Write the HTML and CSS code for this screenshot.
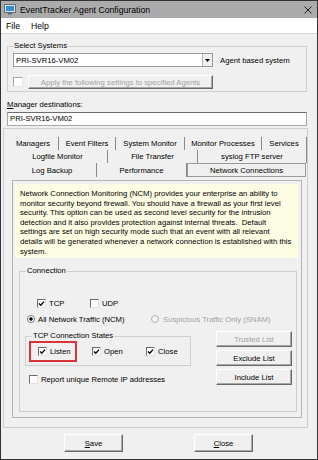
FILE: index.html
```html
<!DOCTYPE html>
<html>
<head>
<meta charset="utf-8">
<title>EventTracker Agent Configuration</title>
<link rel="stylesheet" href="styles.css">
</head>
<body>
<div class="window">
  <div class="titlebar">
    <svg class="appicon" width="12" height="11" viewBox="0 0 12 11">
      <rect x="0.5" y="0.5" width="11" height="8" fill="#dfe4ea" stroke="#5d6d7e"/>
      <rect x="2" y="2" width="8" height="5" fill="#2e8fd6"/>
      <rect x="4" y="9" width="4" height="1.6" fill="#5d6d7e"/>
    </svg>
    <span class="title">EventTracker Agent Configuration</span>
    <svg class="xclose" width="8" height="8" viewBox="0 0 8 8">
      <path d="M0.5 0.5 L7.5 7.5 M7.5 0.5 L0.5 7.5" stroke="#222" stroke-width="1"/>
    </svg>
  </div>
  <div class="menubar"><span>File</span><span>Help</span></div>

  <div class="content">
    <fieldset class="group sel">
      <legend>Select Systems</legend>
      <div class="srow">
        <div class="combo">
          <span>PRI-SVR16-VM02</span>
          <span class="drop"><svg width="5" height="3" viewBox="0 0 5 3"><path d="M0 0 H5 L2.5 3 Z" fill="#000"/></svg></span>
        </div>
        <span class="agent">Agent based system</span>
      </div>
      <div class="srow">
        <span class="cb dis"></span>
        <div class="btn dis apply">Apply the following settings to specified Agents</div>
      </div>
    </fieldset>

    <div class="mgrlabel"><u>M</u>anager destinations:</div>
    <div class="input">PRI-SVR16-VM02</div>

    <div class="tabframe">
      <div class="tabrow">
        <div class="tab w51">Managers</div>
        <div class="tab w57">Event Filters</div>
        <div class="tab w69">System Monitor</div>
        <div class="tab w77">Monitor Processes</div>
        <div class="tab w45">Services</div>
      </div>
      <div class="tabrow">
        <div class="tab w100">Logfile Monitor</div>
        <div class="tab w90">File Transfer</div>
        <div class="tab w109">syslog FTP server</div>
      </div>
      <div class="tabrow r3">
        <div class="tab w89">Log Backup</div>
        <div class="tab w90">Performance</div>
        <div class="tab active w119">Network Connections</div>
      </div>

      <div class="panel">
        <div class="desc">Network Connection Monitoring (NCM) provides your enterprise an ability to<br>monitor security beyond firewall. You should have a firewall as your first level<br>security. This option can be used as second level security for the intrusion<br>detection and it also provides protection against internal threats.&nbsp; Default<br>settings are set on high security mode such that an event with all relevant<br>details will be generated whenever a network connection is established with this<br>system.</div>

        <fieldset class="group conn">
          <legend>Connection</legend>
          <div class="crow tcp">
            <div class="item w53"><span class="cb"><svg viewBox="0 0 7 7"><path d="M1 3.4 L2.8 5.2 L6 1.6" fill="none" stroke="#000" stroke-width="1.4"/></svg></span><span>TCP</span></div>
            <div class="item"><span class="cb"></span><span>UDP</span></div>
          </div>
          <div class="crow radios">
            <div class="item w124 g3"><span class="radio on"></span><span>All Network Traffic (NCM)</span></div>
            <div class="item g4 distext"><span class="radio dis"></span><span>Suspicious Traffic Only (SNAM)</span></div>
          </div>
          <div class="split">
            <div class="leftcol">
              <fieldset class="group tcs">
                <legend>TCP Connection States</legend>
                <div class="states">
                  <div class="item listen"><span class="cb"><svg viewBox="0 0 7 7"><path d="M1 3.4 L2.8 5.2 L6 1.6" fill="none" stroke="#000" stroke-width="1.4"/></svg></span><span>Listen</span></div>
                  <div class="item w54 open"><span class="cb"><svg viewBox="0 0 7 7"><path d="M1 3.4 L2.8 5.2 L6 1.6" fill="none" stroke="#000" stroke-width="1.4"/></svg></span><span>Open</span></div>
                  <div class="item"><span class="cb"><svg viewBox="0 0 7 7"><path d="M1 3.4 L2.8 5.2 L6 1.6" fill="none" stroke="#000" stroke-width="1.4"/></svg></span><span>Close</span></div>
                </div>
              </fieldset>
              <div class="item report"><span class="cb"></span><span>Report unique Remote IP addresses</span></div>
            </div>
            <div class="rightcol">
              <div class="btn dis lb">Trusted List</div>
              <div class="btn lb">Exclude List</div>
              <div class="btn lb">Include List</div>
            </div>
          </div>
        </fieldset>
      </div>
    </div>

    <div class="footer">
      <div class="btn fbtn save"><span><u>S</u>ave</span></div>
      <div class="btn fbtn close"><span><u>C</u>lose</span></div>
    </div>
  </div>
</div>
</body>
</html>
```
FILE: styles.css
```css
* { box-sizing: border-box; }
html, body { margin: 0; padding: 0; }
body {
  width: 318px;
  height: 460px;
  overflow: hidden;
  font-family: "Liberation Sans", Arial, sans-serif;
  font-size: 7.7px;
  color: #000;
  background: #f0f0f0;
}
.window {
  width: 318px;
  height: 460px;
  border: 1px solid #333;
  background: #f0f0f0;
  display: flex;
  flex-direction: column;
}
.titlebar {
  flex: none;
  height: 17px;
  background: #ababab;
  display: flex;
  align-items: center;
  padding-left: 3px;
}
.title { margin-left: 4px; font-size: 8.7px; flex: 1; white-space: nowrap; }
.xclose { margin-right: 5px; }
.menubar {
  flex: none;
  height: 16px;
  background: #fff;
  border-bottom: 1px solid #d6d6d6;
  display: flex;
  align-items: center;
  gap: 11px;
  padding-left: 5px;
  font-size: 8.7px;
}
.content {
  flex: 1;
  display: flex;
  flex-direction: column;
  padding-left: 6px;
}

/* group boxes */
.group {
  margin: 0;
  padding: 0;
  min-width: 0;
  border: 1px solid #cfcfcf;
}
.group legend {
  padding: 0 1px;
  height: 10px;
  line-height: 10px;
  white-space: nowrap;
}
.sel {
  margin-top: 7px;
  width: 300px;
  padding: 2px 5px 2px 5px;
}
.srow { display: flex; align-items: center; height: 14px; }
.srow + .srow { margin-top: 8px; }
.combo {
  width: 200px;
  height: 14px;
  background: #fff;
  border: 1px solid #9a9a9a;
  display: flex;
  align-items: center;
  padding-left: 2px;
}
.combo > span:first-child { flex: 1; }
.drop {
  width: 10px;
  height: 12px;
  border-left: 1px solid #b5b5b5;
  background: #f0f0f0;
  display: flex;
  align-items: center;
  justify-content: center;
}
.drop svg { display: block; }
.agent { margin-left: 7px; white-space: nowrap; }
.apply { margin-left: 5px; width: 185px; height: 14px; }

.mgrlabel { margin-top: 8px; height: 10px; line-height: 10px; }
.input {
  margin-top: 2px;
  width: 300px;
  height: 14px;
  background: #fff;
  border: 1px solid #a8a8a8;
  border-top-color: #6e6e6e;
  padding-left: 2px;
  line-height: 12px;
}

/* buttons */
.btn {
  font: inherit;
  background: #f0f0f0;
  border: 1px solid;
  border-color: #fff #6a6a6a #6a6a6a #fff;
  box-shadow: inset -1px -1px 0 #a8a8a8;
  color: #000;
  display: flex;
  align-items: center;
  justify-content: center;
  white-space: nowrap;
}
.btn.dis { color: #a3a3a3; }

/* checkboxes / radios */
.cb {
  flex: none;
  width: 9px;
  height: 9px;
  background: #fff;
  border: 1px solid;
  border-color: #6e6e6e #e2e2e2 #e2e2e2 #6e6e6e;
  display: flex;
  align-items: center;
  justify-content: center;
}
.cb svg { width: 7px; height: 7px; display: block; }
.cb.dis { width: 10px; height: 10px; border-color: #a8a8a8 #e6e6e6 #e6e6e6 #a8a8a8; }
.radio {
  flex: none;
  width: 8px;
  height: 8px;
  border-radius: 50%;
  border: 1px solid #777;
  background: #fff;
}
.radio.on { background: radial-gradient(circle, #000 0 1.4px, #fff 1.9px); }
.radio.dis { border-color: #b0b0b0; background: #f4f4f4; }

/* tabs */
.tabframe {
  margin-top: 2px;
  margin-left: -4px;
  width: 305px;
  height: 300px;
  border: 1px solid #cdcdcd;
  padding: 8px 0 0 4px;
}
.tabrow { display: flex; height: 13px; }
.tabrow.r3 { height: 14px; }
.tab {
  flex: none;
  display: flex;
  align-items: center;
  justify-content: center;
  border-right: 1px solid #8a8a8a;
  white-space: nowrap;
}
.tab.active { border: 1px solid #9a9a9a; }
.w45 { width: 45px; } .w51 { width: 51px; } .w57 { width: 57px; }
.w69 { width: 69px; } .w77 { width: 77px; } .w89 { width: 89px; }
.w90 { width: 90px; } .w100 { width: 100px; } .w109 { width: 109px; }
.w119 { width: 119px; } .w53 { width: 53px; } .w54 { width: 54px; }
.w124 { width: 124px; }

.panel {
  margin-top: 3px;
  margin-left: 4px;
  width: 290px;
  height: 238px;
  border: 1px solid #b3b3b3;
  padding: 1px 0 0 2px;
}
.desc {
  margin-top: 2px;
  width: 283px;
  height: 74px;
  background: #fdfde3;
  padding: 5px 0 0 5px;
  line-height: 9.6px;
  white-space: nowrap;
}
.conn {
  margin-top: 8px;
  margin-left: 4px;
  width: 278px;
  padding: 0 0 26px 6px;
}
.crow { display: flex; align-items: center; height: 10px; }
.tcp { margin-top: 22px; padding-left: 11px; }
.radios { margin-top: 6px; padding-left: 1px; }
.item { display: flex; align-items: center; gap: 3px; white-space: nowrap; }
.item.g3 { gap: 3px; }
.item.g4 { gap: 4px; }
.distext { color: #a3a3a3; }

.split { display: flex; margin-top: 7px; }
.leftcol { margin-left: -1px; width: 166px; display: flex; flex-direction: column; }
.tcs { width: 166px; padding: 0 0 3px 3px; }
.tcs legend { margin-left: 3px; }
.states { display: flex; align-items: center; height: 21px; }
.listen {
  width: 48px;
  height: 21px;
  border: 2px solid #d8343c;
  padding-left: 7px;
}
.open { margin-left: 15px; }
.report { margin-top: 8px; padding-left: 4px; height: 10px; }
.rightcol { margin-left: 25px; width: 76px; display: flex; flex-direction: column; }
.lb { height: 16px; }
.lb + .lb { margin-top: 3px; }

.footer { display: flex; margin-top: 6px; }
.fbtn { width: 59px; height: 18px; }
.save { margin-left: 57px; }
.close { margin-left: 71px; }
```
